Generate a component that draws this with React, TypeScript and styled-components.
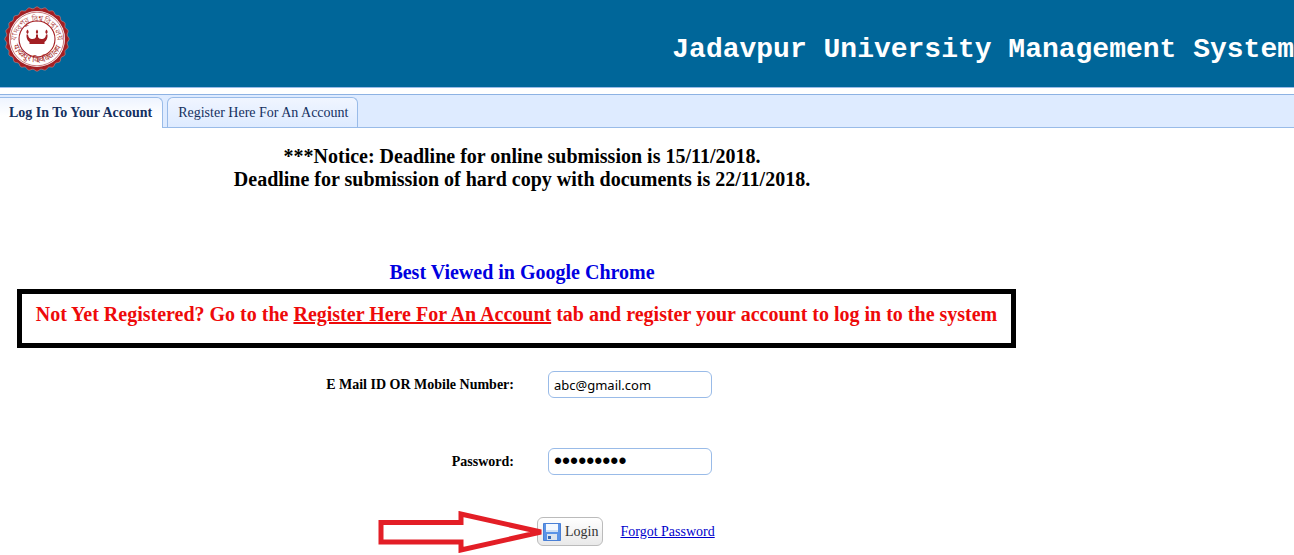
import React from "react";
import styled, { createGlobalStyle } from "styled-components";

const GlobalStyle = createGlobalStyle`
  * { box-sizing: border-box; }
  body {
    margin: 0;
    background: #fff;
    color: #000;
    font-family: "Liberation Serif", "Times New Roman", serif;
    font-size: 14px;
  }
`;

const Header = styled.header`
  display: flex;
  align-items: center;
  justify-content: space-between;
  height: 88px;
  padding-left: 4px;
  background: #006699;
  border-bottom: 1px solid #99bbe8;
`;

const SealImage = styled.svg`
  width: 66px;
  height: 66px;
  margin-bottom: 10px;
  flex: none;
`;

const SystemTitle = styled.h1`
  margin: 12px 0 0;
  color: #fff;
  font: bold 28px/32px "Liberation Mono", "Courier New", monospace;
  white-space: nowrap;
`;

const TabBar = styled.nav`
  display: flex;
  align-items: flex-end;
  gap: 4px;
  height: 34px;
  margin-top: 6px;
  background: #deebff;
  border-top: 1px solid #8db2e3;
  border-bottom: 1px solid #99bbe8;
`;

const Tab = styled.button<{ $active?: boolean }>`
  height: ${(p) => (p.$active ? 31 : 30)}px;
  margin-bottom: ${(p) => (p.$active ? -1 : 0)}px;
  padding: 0 ${(p) => (p.$active ? 10 : 9)}px ${(p) => (p.$active ? 1 : 0)}px ${(p) => (p.$active ? 9 : 10)}px;
  border: 1px solid #99bbe8;
  border-left-width: ${(p) => (p.$active ? 0 : 1)}px;
  border-bottom: 0;
  border-radius: ${(p) => (p.$active ? "0 6px 0 0" : "6px 6px 0 0")};
  background: ${(p) =>
    p.$active ? "linear-gradient(#eef4ff, #fff 60%)" : "linear-gradient(#f0f5ff, #deebff)"};
  color: #15305f;
  font-family: inherit;
  font-size: 14px;
  font-weight: ${(p) => (p.$active ? "bold" : "normal")};
  white-space: nowrap;
`;

const Main = styled.main`
  max-width: 1044px;
  padding: 17px 0 9px;
`;

const Notice = styled.p<{ $color?: string }>`
  margin: 0;
  color: ${(p) => p.$color ?? "#000"};
  font-size: 20px;
  font-weight: bold;
  line-height: 23px;
  text-align: center;
`;

const BrowserNotice = styled(Notice)`
  margin-top: 70px;
`;

const RegisterBox = styled(Notice)`
  margin: 5px 28px 0 17px;
  padding: 9px 0 17px;
  border: 5px solid #000;
`;

const LoginForm = styled.form`
  display: grid;
  grid-template-columns: 514px 1fr;
  column-gap: 34px;
  row-gap: 50px;
  align-items: center;
  margin-top: 23px;
`;

const FieldLabel = styled.label`
  font-weight: bold;
  text-align: right;
`;

const Field = styled.input`
  width: 164px;
  height: 27px;
  padding: 0 5px;
  border: 1px solid #99bbe8;
  border-radius: 6px;
  background: #fff;
  color: #000;
  font: 13px "Noto Sans", Tahoma, sans-serif;

  &[type="password"] {
    font: 23px "Liberation Sans", Arial, sans-serif;
  }
`;

const Actions = styled.div`
  display: flex;
  align-items: center;
  gap: 17px;
  margin: -8px 0 0 -11px;
  grid-column: 2;
`;

const ButtonHolder = styled.div`
  position: relative;
`;

const LoginButton = styled.button`
  display: flex;
  align-items: center;
  gap: 4px;
  height: 29px;
  padding: 0 4px 0 5px;
  border: 1px solid #bbb;
  border-radius: 6px;
  background: linear-gradient(#fff, #e9e9e9);
  color: #333;
  font-family: inherit;
  font-size: 14px;
`;

const Pointer = styled.svg`
  position: absolute;
  top: -6px;
  right: calc(100% - 7px);
  width: 166px;
  height: 42px;
`;

const ForgotLink = styled.a`
  color: #0000cc;
`;

function Seal() {
  const scallop = Array.from({ length: 192 }, (_, i) => {
    const a = (i / 192) * Math.PI * 2;
    const r = 31.3 + 0.9 * Math.cos(a * 24);
    return `${(33 + r * Math.cos(a)).toFixed(2)},${(33 + r * Math.sin(a)).toFixed(2)}`;
  }).join(" ");
  return (
    <SealImage viewBox="0 0 66 66" role="img" aria-label="Jadavpur University seal">
      <defs>
        <path id="arc-top" d="M12.500 36a20.500 20.500 0 1 1 41 0" />
        <path id="arc-bottom" d="M7.500 31a25.500 25.500 0 0 0 51 0" />
      </defs>
      <polygon points={scallop} fill="#a31f24" stroke="#d08a86" strokeWidth=".6" />
      <circle cx="33" cy="33" r="28" fill="#fff" />
      <circle cx="33" cy="33" r="26.800" fill="none" stroke="#a31f24" strokeWidth=".6" />
      <circle cx="33" cy="33" r="18" fill="none" stroke="#a31f24" strokeWidth="1.1" />
      <g fill="#a31f24" textAnchor="middle">
        <text fontSize="8"><textPath href="#arc-top" startOffset="50%">যাদবপুর বিশ্ববিদ্যালয়</textPath></text>
        <text fontSize="8"><textPath href="#arc-bottom" startOffset="50%">यादवपुर विश्वविद्यालय</textPath></text>
      </g>
      <g fill="#a31f24">
        <path d="M22.500 28.500h1.500c.5 3.500 2 4.500 4.500 4.500 2 0 3-.7 3.500-2v-2.500h2V31c.5 1.300 1.500 2 3.500 2 2.500 0 4-1 4.500-4.500h1.500c.3 3.500-.8 6-3 7.500v2H25.500v-2c-2.200-1.500-3.300-4-3-7.500z" />
        <path d="M23.500 23.500c1.500 2 1.600 3 0 4.500-1.600-1.500-1.500-2.500 0-4.500zM33 23.500c1.500 2 1.600 3 0 4.500-1.600-1.500-1.500-2.500 0-4.500zM42.500 23.500c1.500 2 1.600 3 0 4.500-1.600-1.500-1.500-2.500 0-4.500z" />
      </g>
    </SealImage>
  );
}

function DiskIcon() {
  return (
    <svg width="18" height="18" viewBox="0 0 18 18" aria-hidden="true">
      <path d="M.5.5h17v17H.5z" fill="#5b93e6" stroke="#4a80d6" />
      <path d="M3 1h12v8H3z" fill="#f4f9ff" />
      <path d="M3 7h12v2H3z" fill="#cfe0f5" />
      <path d="M4 11h10v6H4z" fill="#dce4ee" />
      <path d="M5 13h3v3H5z" fill="#3567b5" />
    </svg>
  );
}

export default function App() {
  return (
    <>
      <GlobalStyle />
      <Header>
        <Seal />
        <SystemTitle>Jadavpur University Management System</SystemTitle>
      </Header>
      <TabBar>
        <Tab type="button" $active>Log In To Your Account</Tab>
        <Tab type="button">Register Here For An Account</Tab>
      </TabBar>
      <Main>
        <Notice>
          ***Notice: Deadline for online submission is 15/11/2018.
          <br />
          Deadline for submission of hard copy with documents is 22/11/2018.
        </Notice>
        <BrowserNotice $color="#0000e0">Best Viewed in Google Chrome</BrowserNotice>
        <RegisterBox $color="#ee0a0a">
          Not Yet Registered? Go to the <u>Register Here For An Account</u> tab and register your
          account to log in to the system
        </RegisterBox>
        <LoginForm onSubmit={(e) => e.preventDefault()}>
          <FieldLabel htmlFor="login-id">E Mail ID OR Mobile Number:</FieldLabel>
          <Field id="login-id" type="text" defaultValue="abc@gmail.com" />
          <FieldLabel htmlFor="login-password">Password:</FieldLabel>
          <Field id="login-password" type="password" defaultValue="password1" />
          <Actions>
            <ButtonHolder>
              <LoginButton type="submit">
                <DiskIcon />
                Login
              </LoginButton>
              <Pointer viewBox="0 0 166 42" aria-hidden="true">
                <path
                  d="M3 11.500h80V3l80 18-80 18v-8H3z"
                  fill="none"
                  stroke="#e31e26"
                  strokeWidth="5"
                />
              </Pointer>
            </ButtonHolder>
            <ForgotLink href="#forgot">Forgot Password</ForgotLink>
          </Actions>
        </LoginForm>
      </Main>
    </>
  );
}
